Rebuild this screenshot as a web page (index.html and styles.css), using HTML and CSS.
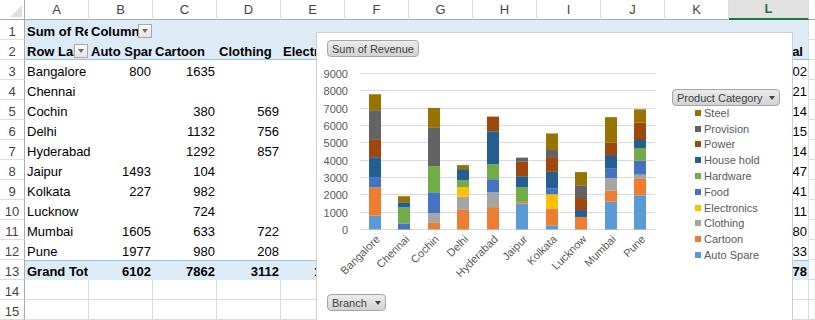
FILE: index.html
```html
<!DOCTYPE html>
<html lang="en">
<head>
  <meta charset="UTF-8">
  <title>Revenue by Branch</title>
  <link rel="stylesheet" href="styles.css">
</head>
<body>
  <div class="workbook">
    <div class="sheet" id="sheet"></div>

    <div class="chart">
      <div class="chart-top">
        <span class="field-btn">Sum of Revenue</span>
      </div>
      <div class="chart-body">
        <svg id="plot" class="plot" width="350" height="237"></svg>
        <div class="legend">
          <span class="field-btn">Product Category <i class="caret"></i></span>
          <ul class="legend-list" id="legend"></ul>
        </div>
      </div>
      <div class="chart-bottom">
        <span class="field-btn">Branch <i class="caret"></i></span>
      </div>
    </div>
  </div>

  <script>
    const categories = ["Auto Spare", "Cartoon", "Clothing", "Electronics", "Food",
      "Hardware", "House hold", "Power", "Provision", "Steel"];
    const colors = ["#5b9bd5", "#ed7d31", "#a5a5a5", "#ffc000", "#4472c4",
      "#70ad47", "#255e91", "#9e480e", "#636363", "#997300"];
    const branches = [
      { name: "Bangalore", values: [800, 1635, 0, 0, 583, 0, 1154, 1039, 1673, 918] },
      { name: "Chennai",   values: [0, 0, 0, 0, 350, 925, 295, 0, 0, 351] },
      { name: "Cochin",    values: [0, 380, 569, 0, 1198, 1509, 0, 0, 2243, 1115] },
      { name: "Delhi",     values: [0, 1132, 756, 549, 0, 406, 639, 0, 0, 233] },
      { name: "Hyderabad", values: [0, 1292, 857, 0, 752, 871, 1895, 847, 0, 0] },
      { name: "Jaipur",    values: [1493, 104, 0, 0, 0, 840, 638, 832, 240, 0] },
      { name: "Kolkata",   values: [227, 982, 0, 822, 348, 0, 948, 851, 406, 957] },
      { name: "Lucknow",   values: [0, 724, 0, 0, 0, 0, 398, 696, 735, 758] },
      { name: "Mumbai",    values: [1605, 633, 722, 0, 580, 0, 754, 716, 0, 1470] },
      { name: "Pune",      values: [1977, 980, 208, 0, 800, 735, 464, 1006, 0, 763] }
    ];
    // the chart floats over E..K, so only the cells that peek out get written
    const shownHead = 4, shownBody = 3;

    const sum = arr => arr.reduce((a, b) => a + b, 0);

    // ---- sheet ----
    const sheet = document.getElementById("sheet");
    const letters = "ABCDEFGHIJKLM".split("");

    function addCell(text, cls) {
      const div = document.createElement("div");
      div.className = "cell " + (cls || "");
      div.textContent = text;
      sheet.appendChild(div);
      return div;
    }

    function addFilterCell(text, cls) {
      const div = addCell("", "has-btn " + cls);
      const txt = document.createElement("span");
      txt.className = "txt";
      txt.textContent = text;
      const btn = document.createElement("span");
      btn.className = "filter-btn";
      div.append(txt, btn);
    }

    addCell("", "corner");
    letters.forEach(l => addCell(l, "col-head" + (l === "L" ? " selected" : "")));

    addCell("1", "row-head");
    addCell("Sum of Revenue", "pv pv-head bold");
    addFilterCell("Column Labels", "pv pv-head bold");
    for (let i = 0; i < 9; i++) addCell("", "pv pv-head");
    addCell("", "pv pv-head last");
    addCell("", "");

    addCell("2", "row-head");
    addFilterCell("Row Labels", "pv pv-head pv-labels bold");
    categories.forEach((c, i) => addCell(i < shownHead ? c : "", "pv pv-head pv-labels bold"));
    addCell("Grand Total", "pv pv-head pv-labels bold last");
    addCell("", "");

    branches.forEach((b, r) => {
      addCell(String(r + 3), "row-head");
      addCell(b.name, "pv" + (b.values[0] ? "" : " spill"));
      b.values.forEach((v, i) => addCell(v && i < shownBody ? v : "", "pv num"));
      addCell(sum(b.values), "pv num last");
      addCell("", "");
    });

    addCell("13", "row-head");
    addCell("Grand Total", "pv pv-total bold");
    categories.forEach((c, i) => {
      const t = i < shownHead ? sum(branches.map(b => b.values[i])) : "";
      addCell(t, "pv pv-total num bold");
    });
    addCell(sum(branches.map(b => sum(b.values))), "pv pv-total num bold last");
    addCell("", "");

    for (let r = 14; r <= 15; r++) {
      addCell(String(r), "row-head");
      letters.forEach(() => addCell("", ""));
    }

    // ---- chart ----
    const svg = document.getElementById("plot");
    const NS = "http://www.w3.org/2000/svg";

    function el(name, attrs, text) {
      const node = document.createElementNS(NS, name);
      for (const k in attrs) node.setAttribute(k, attrs[k]);
      if (text !== undefined) node.textContent = text;
      svg.appendChild(node);
      return node;
    }

    const base = 172.5, unit = 156 / 9000, left = 43, right = 338, step = 29.5;

    for (let k = 0; k <= 9; k++) {
      const y = Math.round(base - k * 1000 * unit - 0.5) + 0.5;
      el("line", { x1: left, x2: right, y1: y, y2: y, class: "grid" });
      el("text", { x: 31, y: y + 4, class: "axis-label", "text-anchor": "end" }, k * 1000);
    }

    branches.forEach((b, i) => {
      const cx = left + step * i + step / 2;
      let y = base;
      b.values.forEach((v, c) => {
        if (!v) return;
        const h = v * unit;
        y -= h;
        el("rect", { x: Math.round(cx - 6), y: y, width: 12, height: h, fill: colors[c] });
      });
      const lx = cx + 3, ly = 180;
      el("text", {
        x: lx, y: ly, class: "axis-label", "text-anchor": "end",
        "dominant-baseline": "central", transform: "rotate(-45 " + lx + " " + ly + ")"
      }, b.name);
    });

    const legend = document.getElementById("legend");
    for (let i = categories.length - 1; i >= 0; i--) {
      const li = document.createElement("li");
      const key = document.createElement("span");
      key.className = "key";
      key.style.background = colors[i];
      li.append(key, categories[i]);
      legend.appendChild(li);
    }
  </script>
</body>
</html>
```

FILE: styles.css
```css
body {
  margin: 0;
  background: #fff;
}
.workbook {
  position: relative;
  width: 815px;
  height: 320px;
  overflow: hidden;
  font-family: "Liberation Sans", Arial, sans-serif;
  font-size: 13px;
  color: #000;
}

/* sheet grid */
.sheet {
  display: grid;
  grid-template-columns: 25px repeat(11, 64px) 80px 64px;
  grid-auto-rows: 20px;
}
.cell {
  box-sizing: border-box;
  height: 20px;
  padding: 3px 1px 0 2px;
  line-height: 17px;
  border-right: 1px solid #dadcdd;
  border-bottom: 1px solid #dadcdd;
  white-space: nowrap;
  overflow: hidden;
}
.pv {
  background: transparent;
  border-color: transparent;
}
.spill {
  overflow: visible;
}
.pv-head {
  background: #ddebf7;
}
.pv-labels {
  border-bottom-color: #9bc2e6;
}
.pv-total {
  background: #ddebf7;
  border-top: 1px solid #9bc2e6;
  padding-top: 2px;
}
.last {
  border-right-color: #dadcdd;
}
.num {
  text-align: right;
}
.bold {
  font-weight: bold;
}

.row-head {
  text-align: center;
  padding: 3px 0 0;
  color: #444;
  border-right-color: #ababab;
}
.col-head {
  text-align: center;
  padding: 0;
  line-height: 19px;
  color: #444;
  border-bottom-color: #ababab;
}
.col-head.selected {
  background: #e1e1e1;
  color: #217346;
  font-weight: bold;
  line-height: 18px;
  border-bottom: 2px solid #217346;
}
.corner {
  position: relative;
  border-right-color: #ababab;
  border-bottom-color: #ababab;
}
.corner::after {
  content: "";
  position: absolute;
  right: 2px;
  bottom: 2px;
  border-left: 12px solid transparent;
  border-bottom: 12px solid #dfdfdf;
}

.has-btn {
  display: flex;
  align-items: flex-start;
  padding-right: 0;
}
.has-btn .txt {
  flex: 1;
  min-width: 0;
  overflow: hidden;
}
.filter-btn {
  flex: none;
  display: flex;
  align-items: center;
  justify-content: center;
  width: 14px;
  height: 14px;
  margin-top: 1px;
  box-sizing: border-box;
  border: 1px solid #a9a9a9;
  background: linear-gradient(#fdfdfd, #e4e4e4);
}
.filter-btn::after {
  content: "";
  border-left: 3px solid transparent;
  border-right: 3px solid transparent;
  border-top: 4px solid #6f6f6f;
}

/* pivot chart */
.chart {
  position: absolute;
  left: 316px;
  top: 32px;
  width: 477px;
  height: 300px;
  box-sizing: border-box;
  border: 1px solid #cfcfcf;
  background: #fff;
  color: #595959;
}
.chart-top {
  height: 24px;
  box-sizing: border-box;
  padding: 7px 0 0 10px;
}
.chart-body {
  display: flex;
  height: 237px;
}
.plot {
  flex: none;
  display: block;
}
.chart-bottom {
  padding-left: 10px;
}
.field-btn {
  display: inline-flex;
  align-items: center;
  gap: 6px;
  height: 17px;
  box-sizing: border-box;
  padding: 0 4px;
  border: 1px solid #a6a6a6;
  border-radius: 4px;
  background: linear-gradient(#ececec, #d2d2d2);
  font-size: 11px;
  color: #404040;
  white-space: nowrap;
}
.chart-bottom .field-btn {
  gap: 8px;
}
.caret {
  display: inline-block;
  border-left: 3.5px solid transparent;
  border-right: 3.5px solid transparent;
  border-top: 4px solid #404040;
}

.grid {
  stroke: #d9d9d9;
  stroke-width: 1;
}
.axis-label {
  font-family: "Liberation Sans", Arial, sans-serif;
  font-size: 11px;
  fill: #595959;
}

.legend {
  margin-left: 5px;
  padding-top: 32px;
}
.legend-list {
  list-style: none;
  margin: -1px 0 0;
  padding: 0 0 0 23px;
  font-size: 11px;
}
.legend-list li {
  display: flex;
  align-items: center;
  gap: 3px;
  height: 15.8px;
}
.key {
  width: 6px;
  height: 6px;
}
```
